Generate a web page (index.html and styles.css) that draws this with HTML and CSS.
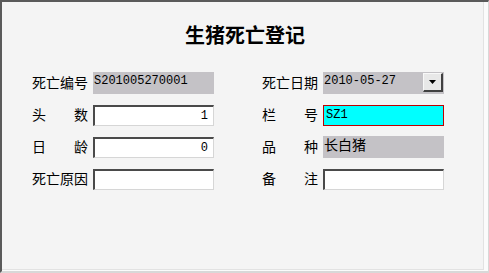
FILE: index.html
```html
<!DOCTYPE html>
<html lang="zh-CN">
<head>
    <meta charset="UTF-8">
    <title>生猪死亡登记</title>
    <link rel="stylesheet" href="styles.css">
</head>
<body>
    <div class="window">
        <h1>生猪死亡登记</h1>

        <div class="form">
            <div class="group">
                <label>死亡编号</label>
                <div class="box readonly">S201005270001</div>
            </div>
            <div class="group">
                <label>死亡日期</label>
                <div class="box readonly date">
                    <span>2010-05-27</span>
                    <span class="drop"><svg width="7" height="4" viewBox="0 0 7 4"><path d="M0 0h7L3.5 4z" fill="#000"/></svg></span>
                </div>
            </div>

            <div class="group">
                <label class="spread"><span>头</span><span>数</span></label>
                <div class="box input num">1</div>
            </div>
            <div class="group">
                <label class="spread"><span>栏</span><span>号</span></label>
                <div class="box focus">SZ1</div>
            </div>

            <div class="group">
                <label class="spread"><span>日</span><span>龄</span></label>
                <div class="box input num">0</div>
            </div>
            <div class="group">
                <label class="spread"><span>品</span><span>种</span></label>
                <div class="box readonly cjk">长白猪</div>
            </div>

            <div class="group">
                <label>死亡原因</label>
                <div class="box input"></div>
            </div>
            <div class="group">
                <label class="spread"><span>备</span><span>注</span></label>
                <div class="box input"></div>
            </div>
        </div>
    </div>
</body>
</html>
```

FILE: styles.css
```css
body {
    margin: 0;
    font-family: "Noto Sans CJK SC", sans-serif;
    background-color: #f4f4f4;
}
.window {
    box-sizing: border-box;
    width: 489px;
    height: 273px;
    background-color: #f4f4f4;
    border-top: 2px solid #5a5a5a;
    border-left: 2px solid #5a5a5a;
    border-right: 1px solid #d8d8d8;
    border-bottom: 2px solid #d8d8d8;
    box-shadow: inset -4px -1px 0 #fbfbfb, inset -5px -2px 0 #e2e2e2;
}
h1 {
    margin: 0;
    padding-top: 21px;
    height: 49px;
    text-align: center;
    font-size: 20px;
    line-height: 24px;
    font-weight: bold;
    color: #000;
}
.form {
    display: grid;
    grid-template-columns: 182px 182px;
    column-gap: 48px;
    row-gap: 10px;
    padding-left: 30px;
}
.group {
    display: flex;
    align-items: center;
    gap: 5px;
    height: 22px;
}
label {
    flex-shrink: 0;
    width: 56px;
    font-size: 14px;
    line-height: 16px;
    white-space: nowrap;
    color: #000;
    margin-top: -3px;
}
.spread {
    display: flex;
    justify-content: space-between;
}
.box {
    flex-shrink: 0;
    box-sizing: border-box;
    width: 121px;
    height: 22px;
    font-family: "Liberation Mono", monospace;
    font-size: 12px;
    line-height: 14px;
    color: #000;
    padding: 2px 1px;
}
.readonly {
    background-color: #c4c2c6;
}
.input {
    height: 21px;
    background-color: #fff;
    border-top: 2px solid #4a4a4a;
    border-left: 2px solid #4a4a4a;
    border-right: 1px solid #d6d6d6;
    border-bottom: 1px solid #d6d6d6;
}
.num {
    text-align: right;
    padding: 2px 5px 0 0;
}
.focus {
    height: 21px;
    background-color: #00ffff;
    border: 1px solid #c00000;
    padding: 2px 2px;
}
.cjk {
    font-family: "Noto Sans CJK SC", sans-serif;
    font-size: 14px;
    line-height: 16px;
    padding: 0 1px;
}
.date {
    display: flex;
    justify-content: space-between;
    align-items: flex-start;
    padding: 2px 1px 0 1px;
}
.drop {
    box-sizing: border-box;
    width: 20px;
    height: 19px;
    display: flex;
    align-items: center;
    justify-content: center;
    background-color: #e8e8e8;
    border-top: 1px solid #f8f8f8;
    border-left: 1px solid #f8f8f8;
    border-right: 2px solid #404040;
    border-bottom: 2px solid #404040;
    margin-top: -1px;
}
```
